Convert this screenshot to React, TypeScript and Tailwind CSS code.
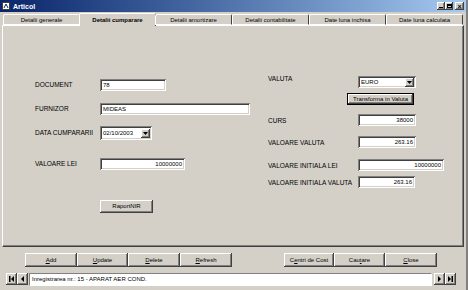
import React from "react";

const raised =
  "bg-[#d4d0c8] shadow-[inset_-1px_-1px_0_#404040,inset_1px_1px_0_#ffffff,inset_-2px_-2px_0_#808080]";
const sunken =
  "bg-white shadow-[inset_1px_1px_0_#808080,inset_-1px_-1px_0_#ffffff,inset_2px_2px_0_#404040,inset_-2px_-2px_0_#d4d0c8]";

const tabs = [
  "Detalii generale",
  "Detalii cumparare",
  "Detalii amortizare",
  "Detalii contabilitate",
  "Date luna inchisa",
  "Date luna calculata",
];

function Field({ w, value, right }: { w: string; value: string; right?: boolean }) {
  return (
    <div className={`${sunken} ${w} h-[12px] flex items-center px-[3px] ${right ? "justify-end" : ""}`}>
      <span className="text-[6px] leading-none text-black">{value}</span>
    </div>
  );
}

function DropArrow() {
  return (
    <div className={`${raised} w-[9px] h-[9px] flex items-center justify-center`}>
      <svg width="5" height="3" viewBox="0 0 5 3">
        <path d="M0 0h5L2.5 3z" fill="#000" />
      </svg>
    </div>
  );
}

function Btn({ children, w }: { children: React.ReactNode; w: string }) {
  return (
    <div className={`${raised} ${w} h-[14px] flex items-center justify-center text-[6px] text-black`}>
      {children}
    </div>
  );
}

function NavBtn({ dir, end }: { dir: "l" | "r"; end?: boolean }) {
  return (
    <div className={`${raised} w-[11px] h-[12px] flex items-center justify-center`}>
      <svg width="7" height="6" viewBox="0 0 7 6">
        {dir === "l" ? (
          <>
            {end && <rect x="1" y="0" width="1.5" height="6" fill="#000" />}
            <path d={end ? "M6 0v6L3 3z" : "M5 0v6L2 3z"} fill="#000" />
          </>
        ) : (
          <>
            <path d={end ? "M1 0v6l3-3z" : "M2 0v6l3-3z"} fill="#000" />
            {end && <rect x="4.5" y="0" width="1.5" height="6" fill="#000" />}
          </>
        )}
      </svg>
    </div>
  );
}

export default function App() {
  return (
    <div className="w-[468px] h-[290px] bg-[#d4d0c8] overflow-hidden flex flex-col font-['Liberation_Sans',Arial,sans-serif] text-[6.5px] text-black border-r-2 border-r-[#808080]">
      {/* title bar */}
      <div className="h-[12px] flex items-center bg-linear-to-r from-[#0a246a] to-[#a6caf0] pl-[2px] pr-[2px]">
        <svg width="8" height="8" viewBox="0 0 8 8">
          <rect x="0.5" y="0.5" width="7" height="7" fill="#fff" stroke="#404040" />
          <path d="M2 6l2-4 2 4" stroke="#0a246a" fill="none" />
        </svg>
        <span className="ml-[3px] text-white font-bold text-[7px] leading-none">Articol</span>
        <div className="ml-auto flex items-center">
          <div className={`${raised} w-[8px] h-[8px] flex items-end justify-center pb-[2px]`}>
            <div className="w-[4px] h-[1px] bg-black" />
          </div>
          <div className={`${raised} w-[8px] h-[8px] flex items-center justify-center`}>
            <div className="w-[5px] h-[4px] border border-black border-t-2" />
          </div>
          <div className={`${raised} ml-[2px] w-[9px] h-[8px] flex items-center justify-center text-[7px] font-bold leading-none`}>
            ×
          </div>
        </div>
      </div>

      {/* tabs */}
      <div className="h-[13px] flex items-end px-[3px] relative z-10">
        {tabs.map((t, i) => {
          const sel = i === 1;
          return (
            <div
              key={t}
              className={`flex-1 flex items-center justify-center border-l border-t border-l-white border-t-white border-r border-r-[#404040] rounded-t-[2px] text-[6px] leading-none ${
                sel ? "h-[13px] font-bold -mb-[1px] bg-[#d4d0c8] -mx-[1px]" : "h-[11px] border-b border-b-white"
              }`}
            >
              {t}
            </div>
          );
        })}
      </div>

      {/* panel */}
      <div className="mx-[2px] h-[222px] border border-t-white border-l-white border-r-[#404040] border-b-[#404040] shadow-[inset_-1px_-1px_0_#808080] flex">
        {/* left column */}
        <div className="w-[265px] pl-[32px] flex flex-col">
          <div className="mt-[53px] flex items-center">
            <span className="w-[65px]">DOCUMENT</span>
            <Field w="w-[66px]" value="78" />
          </div>
          <div className="mt-[12px] flex items-center">
            <span className="w-[65px]">FURNIZOR</span>
            <Field w="w-[150px]" value="MIDEAS" />
          </div>
          <div className="mt-[11px] flex items-center">
            <span className="w-[65px]">DATA CUMPARARII</span>
            <div className={`${sunken} w-[52px] h-[14px] flex items-center pl-[3px] pr-[2px]`}>
              <span className="text-[6px] leading-none">02/10/2003</span>
              <div className="ml-auto">
                <DropArrow />
              </div>
            </div>
          </div>
          <div className="mt-[18px] flex items-center">
            <span className="w-[65px]">VALOARE LEI</span>
            <Field w="w-[85px]" value="10000000" right />
          </div>
          <div className="mt-[30px] pl-[65px]">
            <div className={`${raised} w-[53px] h-[13px] flex items-center justify-center text-[6px]`}>
              RaportNIR
            </div>
          </div>
        </div>

        {/* right column */}
        <div className="flex flex-col">
          <div className="mt-[50px] flex items-start">
            <span className="w-[90px] -mt-[2px]">VALUTA</span>
            <div className={`${sunken} w-[58px] h-[12px] flex items-center pl-[3px] pr-[2px]`}>
              <span className="text-[6px] leading-none">EURO</span>
              <div className="ml-auto">
                <DropArrow />
              </div>
            </div>
          </div>
          <div className="mt-[5px] pl-[79px]">
            <div className={`w-[67px] h-[12px] flex items-center justify-center text-[6px] border border-black ${raised}`}>
              Transforma in Valuta
            </div>
          </div>
          <div className="mt-[9px] flex items-start">
            <span className="w-[90px] pt-[2px]">CURS</span>
            <Field w="w-[58px]" value="38000" right />
          </div>
          <div className="mt-[10px] flex items-start">
            <span className="w-[90px] pt-[2px]">VALOARE VALUTA</span>
            <Field w="w-[58px]" value="263.16" right />
          </div>
          <div className="mt-[11px] flex items-start">
            <span className="w-[90px] pt-[2px]">VALOARE INITIALA LEI</span>
            <Field w="w-[86px]" value="10000000" right />
          </div>
          <div className="mt-[5px] flex items-start">
            <span className="w-[90px] pt-[2px] whitespace-nowrap">VALOARE INITIALA VALUTA</span>
            <Field w="w-[57px]" value="263.16" right />
          </div>
        </div>
      </div>

      {/* command buttons */}
      <div className="mt-[6px] flex">
        <div className="ml-[25px] flex">
          <Btn w="w-[52px]"><span><u>A</u>dd</span></Btn>
          <Btn w="w-[51px]"><span><u>U</u>pdate</span></Btn>
          <Btn w="w-[52px]"><span><u>D</u>elete</span></Btn>
          <Btn w="w-[52px]"><span><u>R</u>efresh</span></Btn>
        </div>
        <div className="ml-[52px] flex">
          <Btn w="w-[50px]"><span>C<u>e</u>ntri de Cost</span></Btn>
          <Btn w="w-[51px]"><span>Cau<u>t</u>are</span></Btn>
          <Btn w="w-[52px]"><span><u>C</u>lose</span></Btn>
        </div>
      </div>

      {/* record navigator */}
      <div className="mt-[5px] ml-[6px] w-[450px] h-[14px] flex items-center">
        <NavBtn dir="l" end />
        <NavBtn dir="l" />
        <div className="flex-1 h-[13px] bg-white border border-[#808080] border-b-white border-r-white flex items-center pl-[2px] ml-[1px]">
          <span className="text-[6px] leading-none">Inregistrarea nr.: 15 - APARAT AER COND.</span>
        </div>
        <div className="w-[2px]" />
        <NavBtn dir="r" />
        <NavBtn dir="r" end />
      </div>
    </div>
  );
}
